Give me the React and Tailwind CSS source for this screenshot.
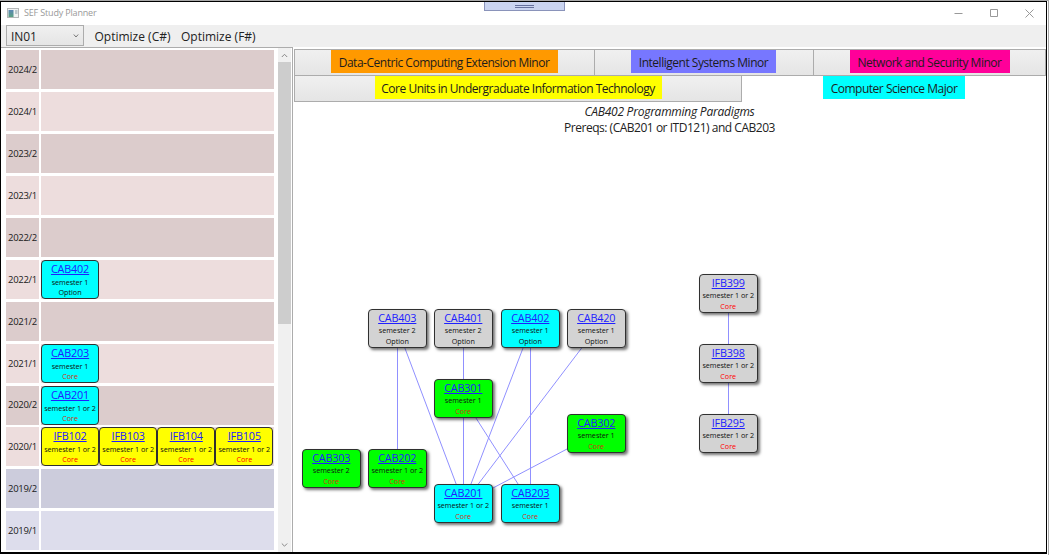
import React from "react";

const fills = {
  cyan: "bg-[#00ffff]",
  yellow: "bg-[#ffff00]",
  green: "bg-[#00ff00]",
  gray: "bg-[#d3d3d3]",
};

const terms = [
  { label: "2024/2", tone: "bg-[#dccccc]" },
  { label: "2024/1", tone: "bg-[#eddddd]" },
  { label: "2023/2", tone: "bg-[#dccccc]" },
  { label: "2023/1", tone: "bg-[#eddddd]" },
  { label: "2022/2", tone: "bg-[#dccccc]" },
  { label: "2022/1", tone: "bg-[#eddddd]", units: [["CAB402", "semester 1", "Option", "cyan"]] },
  { label: "2021/2", tone: "bg-[#dccccc]" },
  { label: "2021/1", tone: "bg-[#eddddd]", units: [["CAB203", "semester 1", "Core", "cyan"]] },
  { label: "2020/2", tone: "bg-[#dccccc]", units: [["CAB201", "semester 1 or 2", "Core", "cyan"]] },
  {
    label: "2020/1",
    tone: "bg-[#eddddd]",
    units: [
      ["IFB102", "semester 1 or 2", "Core", "yellow"],
      ["IFB103", "semester 1 or 2", "Core", "yellow"],
      ["IFB104", "semester 1 or 2", "Core", "yellow"],
      ["IFB105", "semester 1 or 2", "Core", "yellow"],
    ],
  },
  { label: "2019/2", tone: "bg-[#ccccdc]" },
  { label: "2019/1", tone: "bg-[#ddddec]" },
];

// Node positions are relative to the top-left corner of the graph canvas.
const nodes = [
  [75, 207, "CAB403", "semester 2", "Option", "gray"],
  [141, 207, "CAB401", "semester 2", "Option", "gray"],
  [208, 207, "CAB402", "semester 1", "Option", "cyan"],
  [274, 207, "CAB420", "semester 1", "Option", "gray"],
  [141, 277, "CAB301", "semester 1", "Core", "green"],
  [274, 312, "CAB302", "semester 1", "Core", "green"],
  [9, 347, "CAB303", "semester 2", "Core", "green"],
  [75, 347, "CAB202", "semester 1 or 2", "Core", "green"],
  [141, 382, "CAB201", "semester 1 or 2", "Core", "cyan"],
  [208, 382, "CAB203", "semester 1", "Core", "cyan"],
  [406, 172, "IFB399", "semester 1 or 2", "Core", "gray"],
  [406, 242, "IFB398", "semester 1 or 2", "Core", "gray"],
  [406, 312, "IFB295", "semester 1 or 2", "Core", "gray"],
];

const edges = [
  ["CAB403", "CAB202"],
  ["CAB403", "CAB201"],
  ["CAB401", "CAB201"],
  ["CAB402", "CAB201"],
  ["CAB402", "CAB203"],
  ["CAB420", "CAB201"],
  ["CAB301", "CAB203"],
  ["CAB302", "CAB201"],
  ["IFB399", "IFB398"],
  ["IFB398", "IFB295"],
];

function center(code) {
  const n = nodes.find((item) => item[2] === code);
  return [n[0] + 29.5, n[1] + 19.5];
}

function Unit({ code, when, kind, fill, raised }) {
  return (
    <div
      className={`flex h-[39px] shrink-0 flex-col items-center whitespace-nowrap rounded-[4px] border border-[#303030] pt-px ${
        raised ? "w-[58.5px] shadow-[2px_2px_3px_rgba(0,0,0,0.55)]" : "w-[58.1px]"
      } ${fills[fill]}`}
    >
      <span className="text-[10.8px] leading-[13px] tracking-[-0.15px] text-[#2020ff] underline underline-offset-1">{code}</span>
      <span className={`text-[7.2px] font-medium leading-[10px] tracking-[-0.03px] text-[#101010] ${raised ? "mt-px" : "mt-[2px]"}`}>{when}</span>
      <span
        className={`text-[7.2px] font-medium leading-[10px] ${raised ? "mt-px" : ""} ${
          kind === "Core" ? (fill === "gray" || fill === "yellow" ? "text-[#ff0000]" : "text-[#d03010]") : "text-[#101010]"
        }`}
      >
        {kind}
      </span>
    </div>
  );
}

function TitleBar() {
  return (
    <header className="flex h-[23px] shrink-0 items-center justify-between bg-white pb-[2px] pl-[6px] pr-[12px]">
      <div className="flex items-center gap-[5px]">
        <svg width="12" height="10" viewBox="0 0 12 10">
          <defs>
            <linearGradient id="app-icon" x2="0" y2="1">
              <stop stopColor="#5c87b5" />
              <stop offset="1" stopColor="#58a080" />
            </linearGradient>
          </defs>
          <rect x=".5" y=".5" width="11" height="9" fill="#f1f3f3" stroke="#b4b7b8" />
          <rect x="1.5" y="2" width="5" height="7" fill="url(#app-icon)" />
          <rect x="8" y="2" width="2.5" height="4" fill="#bcc8cc" />
        </svg>
        <span className="text-[9px] tracking-[-0.17px] text-[#999]">SEF Study Planner</span>
      </div>
      <svg width="80" height="10" viewBox="0 0 80 10" fill="none" stroke="#999">
        <path d="M.5 5.5h8M36.5 1.5h7v7h-7zM71.5 1.5l8 8M79.5 1.5l-8 8" />
      </svg>
    </header>
  );
}

function Toolbar() {
  return (
    <div className="flex h-[22px] shrink-0 items-start bg-[#efefef] pl-[5px] text-[12px] leading-[22px] text-[#222]">
      <button className="flex h-[21px] w-[78px] items-center justify-between border border-[#acacac] bg-gradient-to-b from-[#f0f0f0] to-[#e5e5e5] pl-[4px] pr-[4px] leading-[20px]">
        <span className="pt-[2px] tracking-[-0.1px]">IN01</span>
        <svg width="6" height="4" viewBox="0 0 6 4" fill="none" stroke="#777">
          <path d="M.8.5L3 3L5.2.5" />
        </svg>
      </button>
      <span className="ml-[10.5px] w-[86.5px] whitespace-nowrap pt-px">Optimize (C#)</span>
      <span className="whitespace-nowrap pt-px">Optimize (F#)</span>
    </div>
  );
}

function Schedule() {
  return (
    <aside className="flex w-[292px] shrink-0 border-r border-t border-[#acacac] bg-white">
      <div className="flex flex-col gap-[2.9px] pl-[5px] pt-[2.4px]">
        {terms.map((term) => (
          <div key={term.label} className="flex h-[39px] shrink-0 gap-[2px]">
            <div className={`flex w-[33px] items-center justify-center pt-px text-[9.5px] tracking-[-0.3px] text-[#1a1a1a] ${term.tone}`}>
              {term.label}
            </div>
            <div className={`flex w-[233px] ${term.tone}`}>
              {(term.units || []).map(([code, when, kind, fill]) => (
                <Unit key={code} code={code} when={when} kind={kind} fill={fill} />
              ))}
            </div>
          </div>
        ))}
      </div>
      <div className="ml-[4px] flex w-[13px] flex-col bg-[#f0f0f0]">
        <svg width="13" height="14" viewBox="0 0 13 14" fill="none" stroke="#888" className="shrink-0">
          <path d="M3.8 9L6.5 6.3L9.2 9" />
        </svg>
        <div className="h-[262px] bg-[#cdcdcd]" />
        <svg width="13" height="14" viewBox="0 0 13 14" fill="none" stroke="#888" className="mt-auto shrink-0">
          <path d="M3.8 5.5L6.5 8.2L9.2 5.5" />
        </svg>
      </div>
    </aside>
  );
}

function Tab({ label, tab, chip }) {
  return (
    <div className={`flex shrink-0 justify-center ${tab}`}>
      <span className={`flex h-[23px] items-center justify-center whitespace-nowrap pt-[2px] text-[12px] tracking-[-0.48px] text-[#1c1c1c] ${chip}`}>
        {label}
      </span>
    </div>
  );
}

function Tabs() {
  const idle = "border-b border-r border-[#acacac] bg-gradient-to-b from-[#f0f0f0] to-[#e5e5e5]";
  return (
    <nav className="flex h-[55px] shrink-0 flex-col pl-px pt-px">
      <div className="h-[2px] w-full border-b border-[#acacac]" />
      <div className="flex h-[26px]">
        <Tab label="Data-Centric Computing Extension Minor" tab={`w-[301px] border-l ${idle}`} chip="mr-px w-[227px] bg-[#ff9900]" />
        <Tab label="Intelligent Systems Minor" tab={`w-[219px] ${idle}`} chip="mr-px w-[145px] bg-[#7777ff]" />
        <Tab label="Network and Security Minor" tab={`w-[232px] ${idle}`} chip="w-[160px] bg-[#ff0099]" />
      </div>
      <div className="flex h-[26px]">
        <Tab label="Core Units in Undergraduate Information Technology" tab={`w-[448px] border-l ${idle}`} chip="w-[287px] bg-[#ffff00]" />
        <Tab label="Computer Science Major" tab="w-[304px] bg-white" chip="w-[142px] bg-[#00ffff]" />
      </div>
    </nav>
  );
}

function Graph() {
  return (
    <section className="relative flex-1 overflow-hidden bg-white text-center text-[12px] leading-[16px] text-[#222]">
      <p className="pt-[2px] italic tracking-[-0.25px]">CAB402 Programming Paradigms</p>
      <p className="tracking-[-0.48px]">Prereqs: (CAB201 or ITD121) and CAB203</p>
      <svg width="753" height="450" viewBox="0 0 753 450" className="absolute left-0 top-0" stroke="#9090ff" strokeWidth="1">
        {edges.map(([from, to]) => {
          const [x1, y1] = center(from);
          const [x2, y2] = center(to);
          return <line key={from + to} x1={x1} y1={y1} x2={x2} y2={y2} />;
        })}
      </svg>
      {nodes.map(([x, y, code, when, kind, fill]) => (
        <div key={code} className="absolute" style={{ left: x, top: y }}>
          <Unit code={code} when={when} kind={kind} fill={fill} raised />
        </div>
      ))}
    </section>
  );
}

export default function App() {
  return (
    <div className="h-[555px] w-[1049px] overflow-hidden border-r border-t border-[#a8a8a8] bg-white font-['Open_Sans','Noto_Sans',sans-serif]">
      <div className="relative flex h-[553px] w-[1047px] flex-col overflow-hidden border border-b-2 border-black">
        <TitleBar />
        <Toolbar />
        <main className="flex min-h-0 flex-1">
          <Schedule />
          <div className="flex min-w-0 flex-1 flex-col">
            <Tabs />
            <Graph />
          </div>
        </main>
        <div className="absolute left-[483px] top-0 flex h-[9px] w-[81px] items-center justify-center border border-t-0 border-[#8a93ba] bg-[#cad4f0]">
          <div className="h-[3px] w-[19px] border-y border-[#66719d]" />
        </div>
      </div>
    </div>
  );
}
